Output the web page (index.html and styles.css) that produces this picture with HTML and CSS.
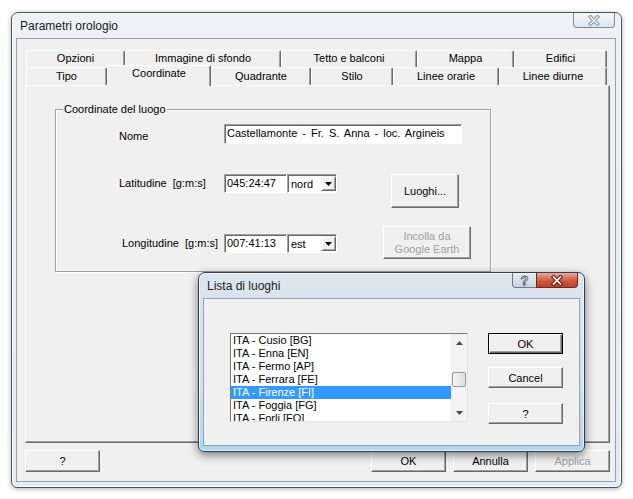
FILE: index.html
```html
<!DOCTYPE html>
<html lang="it">
<head>
  <meta charset="UTF-8">
  <title>Parametri orologio</title>
  <link rel="stylesheet" href="styles.css">
</head>
<body>
  <div class="win main">
    <div class="titlebar">
      <span class="title">Parametri orologio</span>
      <div class="caps">
        <span class="cap close">
          <svg width="14" height="11" viewBox="0 0 14 11"><path d="M3.5 2L10.5 9M10.5 2L3.5 9" stroke="#8a95a2" stroke-width="3.6" stroke-linecap="square" fill="none"/><path d="M3.5 2L10.5 9M10.5 2L3.5 9" stroke="#f6f8fa" stroke-width="1.5" stroke-linecap="square" fill="none"/></svg>
        </span>
      </div>
    </div>
    <div class="client">
      <div class="tabctl">
        <div class="tabrow back">
          <div class="tab">Opzioni</div>
          <div class="tab">Immagine di sfondo</div>
          <div class="tab">Tetto e balconi</div>
          <div class="tab">Mappa</div>
          <div class="tab">Edifici</div>
        </div>
        <div class="tabrow front">
          <div class="tab">Tipo</div>
          <div class="tab sel">Coordinate</div>
          <div class="tab">Quadrante</div>
          <div class="tab">Stilo</div>
          <div class="tab">Linee orarie</div>
          <div class="tab">Linee diurne</div>
        </div>
        <div class="panel">
          <div class="group">
            <div class="group-title">Coordinate del luogo</div>
            <div class="row nome">
              <span class="lbl">Nome</span>
              <div class="edit">Castellamonte - Fr. S. Anna - loc. Argineis</div>
            </div>
            <div class="row lat">
              <span class="lbl">Latitudine&nbsp; [g:m:s]</span>
              <div class="edit coord">045:24:47</div>
              <div class="combo">
                <span class="combo-val">nord</span>
                <span class="combo-arrow"><svg width="7" height="4" viewBox="0 0 7 4"><path d="M0 0H7L3.5 4Z" fill="#000"/></svg></span>
              </div>
              <div class="btn luoghi">Luoghi...</div>
            </div>
            <div class="row long">
              <span class="lbl">Longitudine&nbsp; [g:m:s]</span>
              <div class="edit coord">007:41:13</div>
              <div class="combo">
                <span class="combo-val">est</span>
                <span class="combo-arrow"><svg width="7" height="4" viewBox="0 0 7 4"><path d="M0 0H7L3.5 4Z" fill="#000"/></svg></span>
              </div>
              <div class="btn incolla disabled">Incolla da<br>Google Earth</div>
            </div>
          </div>
        </div>
      </div>
      <div class="footer">
        <div class="btn help">?</div>
        <div class="btn">OK</div>
        <div class="btn">Annulla</div>
        <div class="btn disabled">Applica</div>
      </div>
    </div>
  </div>

  <div class="win dlg">
    <div class="titlebar">
      <span class="title">Lista di luoghi</span>
      <div class="caps">
        <span class="cap qm">?</span>
        <span class="cap close red">
          <svg width="14" height="11" viewBox="0 0 14 11"><path d="M3.5 2L10.5 9M10.5 2L3.5 9" stroke="#5a1c14" stroke-width="3.8" stroke-linecap="square" fill="none"/><path d="M3.5 2L10.5 9M10.5 2L3.5 9" stroke="#fff" stroke-width="1.7" stroke-linecap="square" fill="none"/></svg>
        </span>
      </div>
    </div>
    <div class="client">
      <div class="dlg-body">
        <div class="listbox">
          <div class="items">
            <div class="item">ITA - Cusio [BG]</div>
            <div class="item">ITA - Enna [EN]</div>
            <div class="item">ITA - Fermo [AP]</div>
            <div class="item">ITA - Ferrara [FE]</div>
            <div class="item sel">ITA - Firenze [FI]</div>
            <div class="item">ITA - Foggia [FG]</div>
            <div class="item">ITA - Forli [FO]</div>
          </div>
          <div class="vscroll">
            <span class="sarrow"><svg width="7" height="4" viewBox="0 0 7 4"><path d="M0 4H7L3.5 0Z" fill="#4a4a4a"/></svg></span>
            <div class="track"><div class="thumb"></div></div>
            <span class="sarrow"><svg width="7" height="4" viewBox="0 0 7 4"><path d="M0 0H7L3.5 4Z" fill="#4a4a4a"/></svg></span>
          </div>
        </div>
        <div class="dlg-btns">
          <div class="btn default">OK</div>
          <div class="btn">Cancel</div>
          <div class="btn">?</div>
        </div>
      </div>
    </div>
  </div>
</body>
</html>
```

FILE: styles.css
```css
* {
  box-sizing: border-box;
}

body {
  margin: 0;
  width: 633px;
  height: 499px;
  position: relative;
  overflow: hidden;
  background: #fff;
  font-family: "Liberation Sans", Arial, sans-serif;
  font-size: 11px;
  color: #000;
}

/* windows */
.win {
  position: absolute;
  display: flex;
  flex-direction: column;
  border: 1px solid #4a5360;
  border-radius: 7px 7px 6px 6px;
}

.main {
  left: 11px;
  top: 12px;
  width: 611px;
  height: 476px;
  padding: 0 5px 5px 4px;
  background: linear-gradient(180deg, #eef2f7, #e5ebf2);
  box-shadow: 0 1px 5px rgba(0, 0, 0, 0.3), inset 0 0 0 1px rgba(255, 255, 255, 0.85);
}

.dlg {
  left: 198px;
  top: 272px;
  width: 387px;
  height: 180px;
  padding: 0 4px 5px 4px;
  border-color: #34404f;
  background: linear-gradient(180deg, #dde5ee 0, #d3e0ed 60%, #afd6f1 100%);
  box-shadow: 0 3px 10px rgba(0, 0, 0, 0.5), inset 0 0 0 1px rgba(255, 255, 255, 0.7);
}

.titlebar {
  height: 25px;
  flex-shrink: 0;
  display: flex;
  align-items: flex-start;
}

.title {
  font-size: 12px;
  line-height: 26px;
  padding-left: 4px;
  color: #1a1a1a;
}

.caps {
  margin-left: auto;
  margin-right: 1px;
  display: flex;
}

.dlg .caps {
  margin-right: 2px;
}

.cap {
  height: 15px;
  display: flex;
  align-items: center;
  justify-content: center;
  border: 1px solid #7d8896;
  border-top: none;
}

.close {
  width: 42px;
  border-radius: 0 0 4px 4px;
  background: linear-gradient(180deg, #f4f7fa, #e0e6ed);
}

.close.red {
  border-color: #6b2a22;
  border-radius: 0 0 4px 0;
  background: linear-gradient(180deg, #e9a89b, #d0573f 55%, #c24128);
}

.qm {
  width: 24px;
  border-right: none;
  border-color: #6f7a88;
  border-radius: 0 0 0 4px;
  background: linear-gradient(180deg, #e9eef3, #c8d2dd);
  font-size: 13px;
  font-weight: bold;
  color: #f4f6f8;
  -webkit-text-stroke: 0.8px #4f5a68;
}

.client {
  flex: 1;
  background: #f0f0f0;
  border: 1px solid #98a3b1;
}

/* tabs */
.tabctl {
  margin: 11px 0 0 8px;
  width: 585px;
}

.tabrow {
  display: flex;
  padding-left: 1px;
}

.tabrow.back {
  height: 17px;
}

.tabrow.front {
  height: 18px;
  position: relative;
  z-index: 1;
}

.tab {
  border-top: 1px solid #fff;
  border-left: 1px solid #fff;
  border-right: 1px solid #696969;
  box-shadow: inset -1px 0 #a0a0a0;
  border-radius: 2px 2px 0 0;
  text-align: center;
  background: #f0f0f0;
}

.back .tab {
  line-height: 15px;
}

.front .tab {
  line-height: 17px;
}

.front .tab.sel {
  margin-top: -2px;
  height: 21px;
  line-height: 15px;
}

.back .tab:nth-child(1) { width: 99px; }
.back .tab:nth-child(2) { width: 156px; }
.back .tab:nth-child(3) { width: 136px; }
.back .tab:nth-child(4) { width: 97px; }
.back .tab:nth-child(5) { width: 93px; }

.front .tab:nth-child(1) { width: 81px; }
.front .tab:nth-child(2) { width: 104px; }
.front .tab:nth-child(3) { width: 100px; }
.front .tab:nth-child(4) { width: 82px; }
.front .tab:nth-child(5) { width: 106px; }
.front .tab:nth-child(6) { width: 108px; }

.panel {
  height: 358px;
  padding-left: 29px;
  border: 1px solid;
  border-color: #fff #696969 #696969 #fff;
  box-shadow: inset -1px -1px #a0a0a0;
}

/* group box */
.group {
  width: 436px;
  margin-top: 23px;
  padding-bottom: 12px;
  border: 1px solid #a0a0a0;
  box-shadow: 1px 1px #fff, inset 1px 1px #fff;
}

.group-title {
  display: table;
  margin: -7px 0 0 7px;
  padding: 0 1px;
  line-height: 13px;
  background: #f0f0f0;
}

.row {
  display: flex;
  align-items: flex-start;
  padding-left: 63px;
}

.lbl {
  width: 105px;
  white-space: nowrap;
}

.nome {
  margin-top: 8px;
}

.nome .lbl {
  padding-top: 6px;
  line-height: 13px;
}

.nome .edit {
  width: 238px;
  word-spacing: 2px;
}

.lat {
  margin-top: 30px;
}

.lat .lbl {
  line-height: 19px;
}

.long {
  margin-top: 18px;
}

.long .lbl {
  margin-top: 8px;
  padding-left: 3px;
  line-height: 19px;
}

.long .edit,
.long .combo {
  margin-top: 8px;
}

.edit {
  height: 20px;
  padding: 0 2px;
  line-height: 17px;
  white-space: nowrap;
  background: #fff;
  border: 1px solid;
  border-color: #a0a0a0 #fff #fff #a0a0a0;
  box-shadow: inset 1px 1px #696969;
}

.edit.coord {
  width: 63px;
  height: 19px;
}

.combo {
  width: 50px;
  height: 19px;
  display: flex;
  background: #fff;
  border: 1px solid;
  border-color: #a0a0a0 #fff #fff #a0a0a0;
  box-shadow: inset 1px 1px #696969;
}

.combo-val {
  flex: 1;
  padding: 1px 0 0 3px;
  line-height: 16px;
}

.combo-arrow {
  width: 15px;
  height: 15px;
  margin: 1px 0 0 0;
  display: flex;
  align-items: center;
  justify-content: center;
  background: #f0f0f0;
  border: 1px solid;
  border-color: #f0f0f0 #696969 #696969 #f0f0f0;
  box-shadow: inset 1px 1px #fff, inset -1px -1px #a0a0a0;
}

/* buttons */
.btn {
  display: flex;
  align-items: center;
  justify-content: center;
  text-align: center;
  background: #f0f0f0;
  border: 1px solid;
  border-color: #fff #696969 #696969 #fff;
  box-shadow: inset -1px -1px #a0a0a0;
}

.btn.disabled {
  color: #a0a0a0;
}

.luoghi {
  width: 68px;
  height: 34px;
  margin-left: 54px;
}

.incolla {
  width: 88px;
  height: 33px;
  margin-left: 46px;
  line-height: 13px;
}

.footer {
  display: flex;
  gap: 7px;
  margin: 7px 5px 0 8px;
}

.footer .btn {
  width: 75px;
  height: 22px;
}

.footer .help {
  margin-right: auto;
}

/* lista di luoghi */
.dlg-body {
  display: flex;
  padding: 34px 0 0 26px;
}

.listbox {
  width: 238px;
  height: 89px;
  display: flex;
  background: #fff;
  border: 1px solid;
  border-color: #7a7a7a #e3e3e3 #e3e3e3 #7a7a7a;
}

.items {
  flex: 1;
  overflow: hidden;
}

.item {
  padding-left: 2px;
  line-height: 13px;
  white-space: nowrap;
}

.item.sel {
  background: #3399ff;
  color: #fff;
}

.vscroll {
  width: 16px;
  display: flex;
  flex-direction: column;
  background: #f3f3f3;
  border-left: 1px solid #ececec;
}

.sarrow {
  height: 17px;
  display: flex;
  align-items: center;
  justify-content: center;
}

.track {
  flex: 1;
}

.thumb {
  width: 14px;
  height: 15px;
  margin: 21px 0 0 0;
  border: 1px solid #9a9a9a;
  border-radius: 2px;
  background: linear-gradient(90deg, #f4f4f4, #dedede);
}

.dlg-btns {
  display: flex;
  flex-direction: column;
  margin-left: 20px;
}

.dlg-btns .btn {
  width: 75px;
  height: 21px;
}

.dlg-btns .btn + .btn {
  margin-top: 13px;
}

.dlg-btns .btn:last-child {
  margin-top: 15px;
}

.btn.default {
  border-color: #000;
  box-shadow: inset 1px 1px #fff, inset -1px -1px #696969, inset -2px -2px #a0a0a0;
}
```
